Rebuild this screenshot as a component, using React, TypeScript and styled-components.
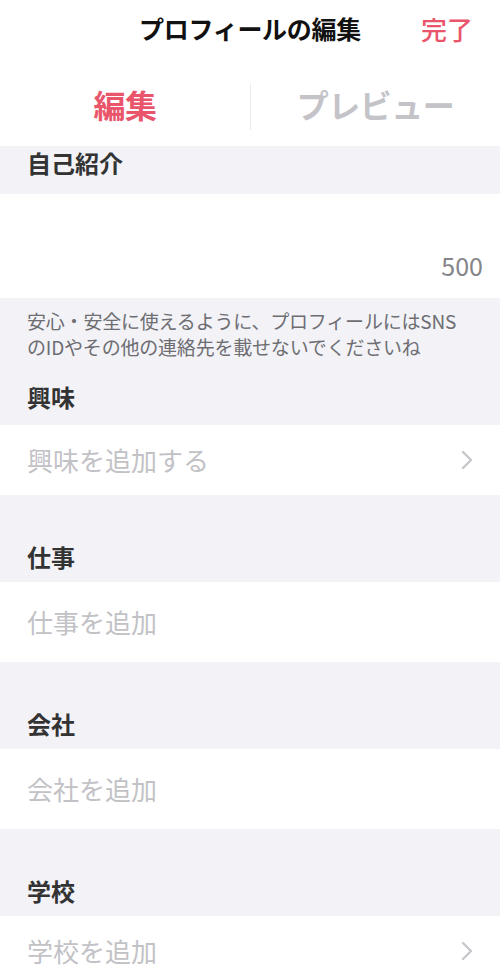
import React from 'react'
import styled, { createGlobalStyle } from 'styled-components'

const GlobalStyle = createGlobalStyle`
  html, body {
    margin: 0;
    padding: 0;
    background: #ffffff;
  }
  body {
    font-family: 'Noto Sans CJK JP', 'Noto Sans', sans-serif;
    -webkit-font-smoothing: antialiased;
  }
`

const ACCENT = '#e9566c'

interface Field {
  label: string
  placeholder: string
  chevron?: boolean
}

const fields: Field[] = [
  { label: '興味', placeholder: '興味を追加する', chevron: true },
  { label: '仕事', placeholder: '仕事を追加' },
  { label: '会社', placeholder: '会社を追加' },
  { label: '学校', placeholder: '学校を追加', chevron: true },
]

const Chevron = () => (
  <ChevronIcon viewBox="0 0 12 20" width={12} height={20}>
    <path
      d="M2 2 L10 10 L2 18"
      fill="none"
      stroke="#c7c7cc"
      strokeWidth={2.4}
      strokeLinecap="round"
      strokeLinejoin="round"
    />
  </ChevronIcon>
)

const App: React.FC = () => {
  return (
    <>
      <GlobalStyle />
      <Screen>
        <NavBar>
          <span />
          <Title>プロフィールの編集</Title>
          <DoneButton>完了</DoneButton>
        </NavBar>

        <Tabs>
          <Tab active>編集</Tab>
          <Tab>プレビュー</Tab>
        </Tabs>

        <SectionHeader first>自己紹介</SectionHeader>
        <BioBox>
          <Counter>500</Counter>
        </BioBox>
        <Note>
          安心・安全に使えるように、プロフィールにはSNS
          <br />
          のIDやその他の連絡先を載せないでくださいね
        </Note>

        {fields.map((f, i) => (
          <React.Fragment key={f.label}>
            <SectionHeader compact={i === 0}>{f.label}</SectionHeader>
            <Row tall={!f.chevron}>
              <Placeholder>{f.placeholder}</Placeholder>
              {f.chevron && <Chevron />}
            </Row>
          </React.Fragment>
        ))}
      </Screen>
    </>
  )
}

export default App

// Styles
const Screen = styled.div`
  width: 500px;
  height: 978px;
  overflow: hidden;
  background: #f2f2f7;
`

const NavBar = styled.header`
  height: 56px;
  padding: 0 27px;
  background: #ffffff;
  display: grid;
  grid-template-columns: 1fr auto 1fr;
  align-items: center;
`

const Title = styled.h1`
  margin: 0;
  font-size: 25px;
  font-weight: 700;
  color: #111111;
  letter-spacing: -0.3px;
`

const DoneButton = styled.button`
  justify-self: end;
  border: none;
  background: none;
  padding: 0;
  font-family: inherit;
  font-size: 26px;
  font-weight: 500;
  color: ${ACCENT};
  cursor: pointer;
`

const Tabs = styled.nav`
  height: 90px;
  background: #ffffff;
  display: grid;
  grid-template-columns: 1fr 1fr;
  align-items: start;
`

const Tab = styled.div<{ active?: boolean }>`
  height: 47px;
  margin-top: 27px;
  padding-bottom: 6px;
  box-sizing: border-box;
  display: flex;
  align-items: center;
  justify-content: center;
  font-size: 32px;
  font-weight: 700;
  color: ${p => (p.active ? ACCENT : '#c3c3c8')};
  letter-spacing: -0.5px;

  & + & {
    border-left: 1px solid #ececee;
  }
`

const SectionHeader = styled.h2<{ first?: boolean; compact?: boolean }>`
  margin: 0;
  padding: ${p =>
    p.first ? '2px 27px 16px' : p.compact ? '22px 27px 13px' : '47px 27px 10px'};
  font-size: 24px;
  font-weight: 700;
  color: #333333;
  line-height: 30px;
`

const BioBox = styled.div`
  height: 104px;
  background: #ffffff;
  display: flex;
  align-items: flex-end;
  justify-content: flex-end;
  padding: 0 17px 19px;
  box-sizing: border-box;
`

const Counter = styled.span`
  font-size: 25px;
  color: #858589;
  line-height: 28px;
`

const Note = styled.p`
  margin: 0;
  padding: 10px 27px 0;
  font-size: 19px;
  line-height: 26px;
  color: #6d6d72;
  letter-spacing: -0.2px;
  white-space: nowrap;
`

const Row = styled.div<{ tall?: boolean }>`
  height: ${p => (p.tall ? '80px' : '70px')};
  background: #ffffff;
  padding: 0 27px;
  display: flex;
  align-items: center;
  justify-content: space-between;
`

const Placeholder = styled.span`
  font-size: 26px;
  color: #c2c2c6;
  line-height: 34px;
`

const ChevronIcon = styled.svg`
  display: block;
`
